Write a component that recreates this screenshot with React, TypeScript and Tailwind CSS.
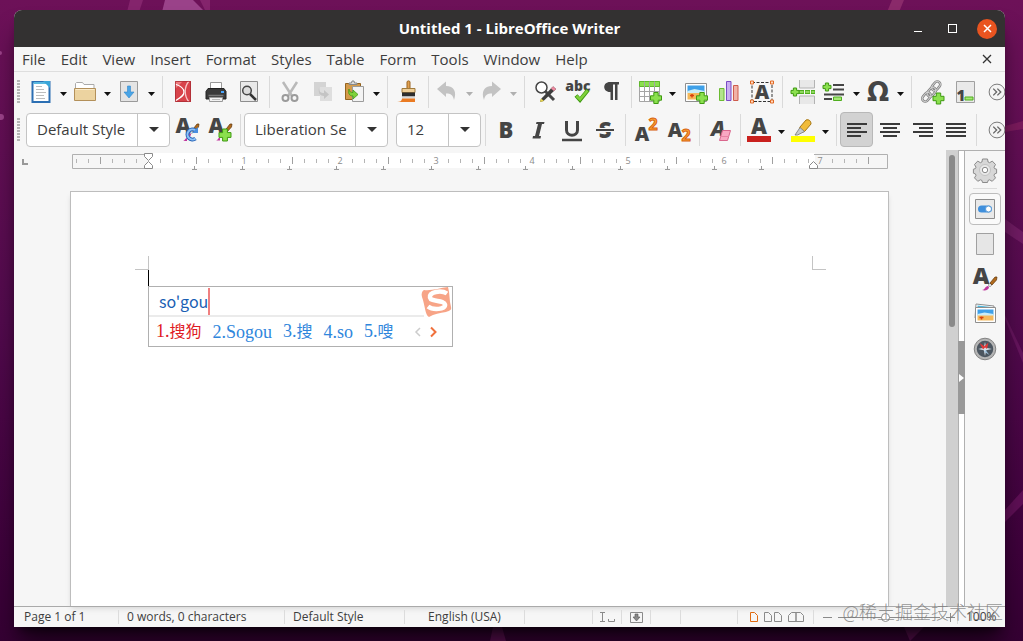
import React from 'react';

const MENUS = ['File', 'Edit', 'View', 'Insert', 'Format', 'Styles', 'Table', 'Form', 'Tools', 'Window', 'Help'];

const INK = '#454545';
const SANS = 'Open Sans, sans-serif';

// ---------------------------------------------------------------- icons

const Svg = ({ children, size = 24 }: { children: React.ReactNode; size?: number }) => (
  <svg width={size} height={size} viewBox="0 0 24 24" fill="none" className="shrink-0 overflow-visible" aria-hidden="true">
    {children}
  </svg>
);

const Glyph = ({ x, y, size, fill = INK, children }: { x: number; y: number; size: number; fill?: string; children: string }) => (
  <text x={x} y={y} fontSize={size} fontWeight="800" fontFamily={SANS} fill={fill} textAnchor="middle">
    {children}
  </text>
);

const Plus = ({ x, y, s = 11 }: { x: number; y: number; s?: number }) => {
  const a = s * 0.3;
  const w = s * 0.4;
  return (
    <path
      d={`M${x + a} ${y}h${w}v${a}h${a}v${w}h-${a}v${a}h-${w}v-${a}h-${a}v-${w}h${a}z`}
      fill="#8be04e"
      stroke="#3f9a12"
      strokeWidth="1"
    />
  );
};

const Brush = ({ x, y }: { x: number; y: number }) => (
  <g transform={`translate(${x} ${y})`}>
    <path d="M0 12c2 0 1-3 4-3l1 1c0 3-3 3-5 2z" fill="#c0359c" />
    <path d="M4 8.500l2-2 1.500 1.500-2 2z" fill="#ddd" stroke="#888" strokeWidth=".5" />
    <path d="M6 6.500L11 0l2 0-.5 3L8 8z" fill="#b06a1c" stroke="#5d3408" strokeWidth=".7" />
  </g>
);

const NewIcon = () => (
  <Svg>
    <path d="M3.500 2h17v20h-17z" fill="#fff" stroke="#2c6fb3" strokeWidth="2" />
    <path d="M4.500 3h15" stroke="#58b8e0" strokeWidth="2" />
    <path d="M14 1h7v7z" fill="#3aa5d8" />
    <path d="M7 6.500h6M7 9.500h8M7 12.500h10M7 15.500h8M7 18.500h9" stroke="#bdbdbd" />
  </Svg>
);

const FolderIcon = () => (
  <Svg>
    <path d="M2.500 8V3.500l1-1h6l1.500 2h10v5" fill="#fff" stroke="#aaa" />
    <path d="M1.500 8.500h21v12h-21z" fill="#ecd3a0" stroke="#b3905a" />
    <path d="M2.500 9.500h19" stroke="#fbeccb" />
  </Svg>
);

const SaveIcon = () => (
  <Svg>
    <path d="M3.500 1.500h17v20h-17z" fill="#e4e4e4" stroke="#9a9a9a" />
    <path d="M10.500 6h3v6H17l-5 6-5-6h3.500z" fill="#4aa5e6" stroke="#2f86cc" strokeWidth=".6" />
  </Svg>
);

const PdfIcon = () => (
  <Svg>
    <path d="M4 1h16v21H4z" fill="#d8434b" />
    <path d="M4 1h8L4 9z" fill="#ef7c80" />
    <path d="M4 4c6 2 9 5 9 8 0 4-4 6-9 9" stroke="#fff" strokeWidth="1.300" />
    <path d="M18 1c-5 6-5 15 0 21" stroke="#f8c5c7" strokeWidth="1.300" />
    <path d="M4.500 1.500h15v20h-15z" stroke="#a92c33" strokeWidth=".8" />
  </Svg>
);

const PrintIcon = () => (
  <Svg>
    <path d="M6.500 2.500h11v8h-11z" fill="#fff" stroke="#999" />
    <path d="M4 8.500h16l2 3v7.500H2v-7.500z" fill="#3a3a3a" stroke="#222" />
    <path d="M4.500 15.500h15" stroke="#777" strokeWidth="1.500" />
    <path d="M17 11h3v2h-3z" fill="#4aa7ff" />
    <path d="M5.500 17.500h13v4h-13z" fill="#f2f2f2" stroke="#999" />
    <path d="M8 19.500h8" stroke="#bbb" />
  </Svg>
);

const PreviewIcon = () => (
  <Svg>
    <path d="M3.500 1.500h17v20h-17z" fill="#e9e9e9" stroke="#8e8e8e" />
    <circle cx="10" cy="10.500" r="4.300" fill="#dcdcdc" stroke={INK} strokeWidth="1.500" />
    <path d="M13 14l6 6" stroke="#333" strokeWidth="2.500" />
  </Svg>
);

const CutIcon = () => (
  <Svg>
    <path d="M5 2l9 14M19 2l-9 14" stroke="#b9b9b9" strokeWidth="2.500" />
    <circle cx="7.500" cy="18" r="3" stroke="#9b9b9b" strokeWidth="2" />
    <circle cx="16.500" cy="18" r="3" stroke="#9b9b9b" strokeWidth="2" />
  </Svg>
);

const CopyIcon = () => (
  <Svg>
    <path d="M3 2h12v14H3z" fill="#d4d4d4" />
    <path d="M9 7h12v14H9z" fill="#dedede" />
    <path d="M8 8c0 4 2 5 5 5v-3l5 4.500-5 4.500v-3c-4 0-6-3-5-8z" fill="#c4c4c4" />
  </Svg>
);

const PasteIcon = () => (
  <Svg>
    <path d="M3.500 3.500h15v16h-15z" fill="#d49a4a" stroke="#94631f" />
    <path d="M7 4.500V3h2.500l.5-2h2l.5 2H15v1.500z" fill="#ddd" stroke="#888" />
    <path d="M10.500 6.500h11v15h-11z" fill="#f3f3f3" stroke="#9b9b9b" />
    <path d="M7 9c0 3 2 3.500 4 3.500V10l5 4.500-5 4.500v-3c-4 0-5-3-4-7z" fill="#7fd13b" stroke="#3f9a12" strokeWidth=".8" />
  </Svg>
);

const BrushIcon = () => (
  <Svg>
    <path d="M11 9V2c0-1.500 3-1.500 3 0v7" fill="#e0a050" stroke="#9b6420" />
    <path d="M6 8.500h13v4H6z" fill="#efcf98" stroke="#a17b3c" />
    <path d="M6 12.500h13v4H6z" fill="#2e2e2e" />
    <path d="M6 16.500h13v2H6z" fill="#d9d9d9" />
    <path d="M6 18.500h13V22H1c3 0 5-1 5-3.500z" fill="#ea7b23" />
  </Svg>
);

const UndoIcon = () => (
  <Svg>
    <path d="M2 9l9-7.500v4.500c8 0 11 6 8 14-1-5-3-6.500-8-6.500V17z" fill="#c3c3c3" />
  </Svg>
);

const RedoIcon = () => (
  <Svg>
    <path d="M22 9l-9-7.500v4.500C5 6 2 12 5 20c1-5 3-6.500 8-6.500V17z" fill="#c3c3c3" />
  </Svg>
);

const FindIcon = () => (
  <Svg>
    <circle cx="8.500" cy="7.500" r="5.500" fill="#fff" stroke={INK} strokeWidth="1.500" />
    <path d="M12 11l9 9" stroke={INK} strokeWidth="3" />
    <path d="M8 19L18 8.500l3 2.500-10.500 10L7 22z" fill="#3d3d3d" />
    <path d="M18 8.500l2-2 3 2.500-2 2z" fill="#f08aa0" stroke="#8a4a5a" strokeWidth=".5" />
    <path d="M8 18.500l3 2.500-4 1z" fill="#e9d64c" />
  </Svg>
);

const SpellIcon = () => (
  <Svg>
    <Glyph x={12} y={11} size={14}>abc</Glyph>
    <path d="M10 15.500l4 4.500 8-10" stroke="#3f9a12" strokeWidth="4" />
    <path d="M10.500 16l3.500 3.500 7.500-9" stroke="#7fd13b" strokeWidth="2.500" />
  </Svg>
);

const PilcrowIcon = () => (
  <Svg>
    <path d="M11 2h9v2.500h-1.500V20H16V4.500h-2V20h-2.500v-8C3.500 12.500 3 2 11 2z" fill={INK} />
  </Svg>
);

const TableIcon = () => (
  <Svg>
    <path d="M1.500 1.500h20v20h-20z" fill="#fff" stroke="#a5a5a5" />
    <path d="M1.500 1.500h20v5h-20z" fill="#8be04e" stroke="#5fb92c" />
    <path d="M1.500 11.500h20M1.500 16.500h20M6.500 1.500v20M11.500 1.500v20M16.500 1.500v20" stroke="#a5a5a5" />
    <Plus x={12.5} y={12.5} />
  </Svg>
);

const ImageIcon = () => (
  <Svg>
    <path d="M1.500 3.500h21v18h-21z" fill="#fff" stroke="#8e8e8e" />
    <path d="M3.500 5.500h17v7h-17z" fill="#3fa0e8" />
    <path d="M3.500 11l7-2 10 2v2h-17z" fill="#c9ecf7" />
    <path d="M3.500 13h17v6.500h-17z" fill="#f4b85a" />
    <path d="M6 15.500h4M8 14v3.500" stroke="#d9400d" strokeWidth="1.500" />
    <Plus x={12.5} y={12.5} />
  </Svg>
);

const ChartIcon = () => (
  <Svg>
    <path d="M2.500 8.500h4.500v12H2.500z" fill="#b3e38c" stroke="#6bbb32" />
    <path d="M9.500 1.500H14v19H9.500z" fill="#c9aef0" stroke="#7a4cc4" />
    <path d="M16.500 5.500H21v15h-4.500z" fill="#f0b3a7" stroke="#cf5c4c" />
  </Svg>
);

const TextBoxIcon = () => (
  <Svg>
    <path d="M2 2.500h20v19H2z" stroke="#333" strokeDasharray="3 1.500" />
    <Glyph x={12} y={19} size={20}>A</Glyph>
    {[[0.5, 1], [20.5, 1], [0.5, 20], [20.5, 20]].map(([x, y]) => (
      <path key={`${x}-${y}`} d={`M${x} ${y}h3v3h-3z`} fill="#ffd9c0" stroke="#e06a26" />
    ))}
  </Svg>
);

const PageBreakIcon = () => (
  <Svg>
    <path d="M8.500 0v8h15V0M8.500 24v-8h15v8" fill="#e8e8e8" stroke="#b3b3b3" />
    <path d="M8 12h16" stroke="#4fae1f" strokeWidth="4" strokeDasharray="5 1" />
    <path d="M8.500 12h15" stroke="#a5e874" strokeWidth="1.500" strokeDasharray="4 2" />
    <Plus x={0} y={8} s={8} />
  </Svg>
);

const FieldIcon = () => (
  <Svg>
    <path d="M11 5h11M11 9.500h11M2 14.500h20M2 19h8" stroke={INK} strokeWidth="2" />
    <path d="M11.500 17h8v3.500h-8z" fill="#a5e874" stroke="#4fae1f" />
    <Plus x={1} y={3} s={8} />
  </Svg>
);

const OmegaIcon = () => (
  <Svg>
    <text x={12} y={21} fontSize={26} fontWeight="bold" fontFamily="DejaVu Sans, sans-serif" fill={INK} textAnchor="middle">Ω</text>
  </Svg>
);

const LinkIcon = () => (
  <Svg>
    <g stroke="#7d7d7d" strokeWidth="2.500">
      <rect x="13" y="1" width="6" height="10" rx="3" transform="rotate(40 16 6)" />
      <rect x="8.500" y="7" width="6" height="10" rx="3" transform="rotate(40 11.500 12)" />
      <rect x="3.500" y="12" width="6" height="10" rx="3" transform="rotate(40 6.500 17)" />
    </g>
    <g stroke="#d0d0d0" strokeWidth="1">
      <rect x="13" y="1" width="6" height="10" rx="3" transform="rotate(40 16 6)" />
      <rect x="8.500" y="7" width="6" height="10" rx="3" transform="rotate(40 11.500 12)" />
      <rect x="3.500" y="12" width="6" height="10" rx="3" transform="rotate(40 6.500 17)" />
    </g>
    <Plus x={13} y={13} />
  </Svg>
);

const FootnoteIcon = () => (
  <Svg>
    <path d="M3.500 1.500h18v21h-18z" fill="#e9e9e9" stroke="#a0a0a0" />
    <Glyph x={8} y={21} size={15}>1</Glyph>
    <path d="M12 17h8v3h-8z" fill="#a5e874" stroke="#4fae1f" />
  </Svg>
);

const UpdateStyleIcon = () => (
  <Svg>
    <Glyph x={8} y={15} size={21}>A</Glyph>
    <Brush x={11} y={6} />
    <path d="M8 23c2 0 2-3 4-3v3z" fill="#c0359c" />
    <path d="M20.500 12.500a5 5 0 1 0 0 8" stroke="#2a67b8" strokeWidth="4" />
    <path d="M20.500 12.500a5 5 0 1 0 0 8" stroke="#8cc0f7" strokeWidth="2" />
    <path d="M23 9v6h-6z" fill="#4a8fe0" />
  </Svg>
);

const NewStyleIcon = () => (
  <Svg>
    <Glyph x={8} y={15} size={21}>A</Glyph>
    <Brush x={11} y={6} />
    <path d="M8 22.500c2 0 2-3 4-3v3z" fill="#c0359c" />
    <Plus x={11} y={11} s={12} />
  </Svg>
);

const BoldIcon = () => <Svg><Glyph x={12} y={20} size={22}>B</Glyph></Svg>;

const ItalicIcon = () => (
  <Svg>
    <path d="M9.500 4h8l-.5 2h-2l-3 12h2l-.5 2.500h-8l.5-2.500h2l3-12H9z" fill={INK} />
  </Svg>
);

const UnderlineIcon = () => (
  <Svg>
    <path d="M6.500 3v9c0 7 11 7 11 0V3" stroke={INK} strokeWidth="3" />
    <path d="M2 22h20" stroke={INK} strokeWidth="2.500" />
  </Svg>
);

const StrikeIcon = () => (
  <Svg>
    <Glyph x={12} y={20} size={22}>S</Glyph>
    <path d="M3 12h18" stroke="#f6f6f6" strokeWidth="4" />
    <path d="M3 12h18" stroke={INK} strokeWidth="2" />
  </Svg>
);

const SuperIcon = () => (
  <Svg>
    <Glyph x={8} y={23} size={20}>A</Glyph>
    <text x={19} y={12} fontSize={16} fontWeight="bold" fontFamily={SANS} fill="#f9a23c" stroke="#d9620b" strokeWidth="1" textAnchor="middle">2</text>
  </Svg>
);

const SubIcon = () => (
  <Svg>
    <Glyph x={8} y={19} size={20}>A</Glyph>
    <text x={19} y={23} fontSize={16} fontWeight="bold" fontFamily={SANS} fill="#f9a23c" stroke="#d9620b" strokeWidth="1" textAnchor="middle">2</text>
  </Svg>
);

const ClearIcon = () => (
  <Svg>
    <text x={10} y={18} fontSize={21} fontWeight="800" fontStyle="italic" fontFamily={SANS} fill={INK} textAnchor="middle">A</text>
    <path d="M14.500 12.500h8l-3 10h-8z" fill="#f9a8c2" stroke="#d9668c" />
    <path d="M13 18.500h8" stroke="#e884a5" />
  </Svg>
);

const FontColorIcon = () => (
  <Svg>
    <Glyph x={12} y={16} size={22}>A</Glyph>
    <path d="M0 18h24v6H0z" fill="#c9211e" />
  </Svg>
);

const HighlightIcon = () => (
  <Svg>
    <path d="M9 9l6-7c3-1 5 1 5 4l-6 7c-1 2-7 0-5-4z" fill="#f0bb3a" stroke="#a87712" />
    <path d="M9 9.500L4 17l2.500 0 7-3.500z" fill="#c7ccd0" stroke="#777" strokeWidth=".8" />
    <path d="M0 18h24v6H0z" fill="#ffff00" />
  </Svg>
);

const AlignIcon = ({ d }: { d: string }) => (
  <Svg>
    <path d={d} stroke="#3a3a3a" strokeWidth="1.800" />
  </Svg>
);

const MoreIcon = () => (
  <Svg size={18}>
    <circle cx="12" cy="12" r="10.500" fill="#f4f4f4" stroke="#777" strokeWidth="1.300" />
    <path d="M7 7.500l4.500 4.500L7 16.500M12.500 7.500L17 12l-4.500 4.500" stroke="#666" strokeWidth="1.800" />
  </Svg>
);

const GearIcon = () => (
  <Svg>
    <path
      d="M9.500 1h5l.6 3 1.500.7 2.700-1.600 3.200 3.400-1.500 2.700.6 1.400 2 .6v4l-2 .7-.6 1.400 1.500 2.600-3.300 3.400-2.600-1.500-1.500.6-.6 2.100h-5l-.6-2.100-1.500-.6-2.600 1.500-3.300-3.400 1.500-2.600-.6-1.400-2-.7v-4l2-.6.6-1.400-1.500-2.700 3.200-3.400L7.400 4.700 8.900 4z"
      fill="#d7d7d7"
      stroke="#8a8a8a"
    />
    <circle cx="12" cy="12" r="5.500" fill="#e9e9e9" stroke="#c2c2c2" />
    <circle cx="12" cy="12" r="2.700" fill="#fff" stroke="#8a8a8a" />
  </Svg>
);

const PropertiesIcon = () => (
  <Svg>
    <path d="M2.500 2.500h19v19h-19z" fill="#e9e9e9" stroke="#8e8e8e" />
    <rect x="5" y="8.500" width="14" height="7" rx="3.500" fill="#3f8fdc" />
    <circle cx="15.500" cy="12" r="3" fill="#fff" stroke="#5a9ad6" />
  </Svg>
);

const PageIcon = () => (
  <Svg>
    <path d="M3.500 1.500h17v21h-17z" fill="#e6e6e6" stroke="#a0a0a0" />
  </Svg>
);

const StylesIcon = () => (
  <Svg>
    <Glyph x={8} y={17} size={23}>A</Glyph>
    <path d="M9 23c3 0 3-4 6-4l1 1c0 3-4 4-7 3z" fill="#c0359c" />
    <path d="M15 18l2-2 2 2-2 2z" fill="#ddd" stroke="#888" strokeWidth=".6" />
    <path d="M17 16l5-6h2l-.5 3L19 18z" fill="#b06a1c" stroke="#5d3408" strokeWidth=".7" />
  </Svg>
);

const GalleryIcon = () => (
  <Svg>
    <path d="M3 2l18 2-1 14-18-2z" fill="#fff" stroke="#8e8e8e" />
    <path d="M4.500 3.500l14 1.500v3h-14z" fill="#4bb7dd" />
    <path d="M2.500 5.500h20v15h-20z" fill="#fff" stroke="#8e8e8e" />
    <path d="M4.500 7.500h16v6h-16z" fill="#3fa0e8" />
    <path d="M4.500 12l7-1.500 9 1.500v2h-16z" fill="#c9ecf7" />
    <path d="M4.500 13.500h16v5h-16z" fill="#f4b85a" />
    <path d="M6.500 15.500h4M8.500 14.500v3" stroke="#d9400d" strokeWidth="1.500" />
  </Svg>
);

const NavigatorIcon = () => (
  <Svg>
    <circle cx="12" cy="12" r="9.500" fill="#4c5660" stroke="#b5b5b5" strokeWidth="2.500" />
    <circle cx="12" cy="12" r="10.800" stroke="#6e6e6e" strokeWidth=".8" />
    <path d="M12 5l1.200 5.800L19 12l-5.800 1.200L12 19l-1.200-5.800L5 12l5.800-1.200z" fill="#d6e0e8" />
    <path d="M15.500 5.500L14 12l-3-2.500z" fill="#e03a3a" />
    <path d="M6.500 6l6 4-2.500 2.500z" fill="#e03a3a" />
    <path d="M12.500 13l4 5-5.500-3.500z" fill="#9fc3e0" />
  </Svg>
);

// ---------------------------------------------------------------- toolbar parts

const ToolButton = ({ label, active, children }: { label: string; active?: boolean; children: React.ReactNode }) => (
  <button
    aria-label={label}
    className={`flex h-[35px] w-[33px] shrink-0 items-center justify-center rounded-sm border ${
      active ? 'border-[#b8b8b8] bg-[#d2d2d2]' : 'border-transparent'
    }`}
  >
    {children}
  </button>
);

const Caret = ({ dim }: { dim?: boolean }) => (
  <svg width="7" height="4" viewBox="0 0 7 4" aria-hidden="true">
    <path d="M0 0h7L3.500 4z" fill={dim ? '#b0b0b0' : '#111'} />
  </svg>
);

const SplitButton = ({ label, dim, children }: { label: string; dim?: boolean; children: React.ReactNode }) => (
  <div className="flex h-[35px] shrink-0">
    <button aria-label={label} className="flex w-[30px] items-center justify-center">{children}</button>
    <button aria-label={`${label} options`} className="flex w-[14px] items-center justify-center pt-1">
      <Caret dim={dim} />
    </button>
  </div>
);

const Gap = () => (
  <div className="flex w-2 shrink-0 justify-center">
    <div className="h-8 w-px bg-[#dadada]" />
  </div>
);

const Grip = () => (
  <svg width="3" height="23" viewBox="0 0 3 23" className="mr-[6px] shrink-0" aria-hidden="true">
    <path d="M1.500 0v23" stroke="#b5b5b5" strokeWidth="3" strokeDasharray="2 1" />
  </svg>
);

const Combo = ({ label, value, className }: { label: string; value: string; className: string }) => (
  <div className={`relative h-[34px] shrink-0 rounded border border-[#c4c4c4] bg-white ${className}`}>
    <select aria-label={label} className="h-full w-full appearance-none bg-transparent pl-[10px] text-[15px] text-[#3d3d3d] outline-none">
      <option>{value}</option>
    </select>
    <span className="pointer-events-none absolute inset-y-0 right-0 flex w-8 items-center justify-center border-l border-[#c4c4c4]">
      <svg width="10" height="5" viewBox="0 0 10 5" aria-hidden="true">
        <path d="M0 0h10L5 5z" fill="#333" />
      </svg>
    </span>
  </div>
);

// ---------------------------------------------------------------- ruler

const INCH = 96;
const ZERO = 76;

const Ruler = () => {
  const ticks = Array.from({ length: 67 }, (_, i) => i - 6).filter(n => n !== 0);
  return (
    <div className="mr-[58px] ml-[58px] h-[18px] overflow-hidden">
      <svg width="816" height="18" viewBox="0 0 816 18" fill="none" aria-hidden="true">
        <path d="M76 1h667v15H76z" fill="#fff" />
        <path d="M76 2.500H.5v14H76M742 2.500h73.500v14H742" stroke="#b0b0b0" />
        {ticks.map(n => {
          const x = ZERO + n * 12 + 0.5;
          if (n % 8 === 0) return null;
          const half = n % 4 === 0;
          return <path key={n} d={half ? `M${x} 5v7` : `M${x} 7v4`} stroke={half ? '#a0a0a0' : '#b5b5b5'} />;
        })}
        {[1, 2, 3, 4, 5, 6, 7].map(n => (
          <text key={n} x={ZERO + n * INCH} y={12} fontSize={9} fontFamily={SANS} fill="#8c8c8c" textAnchor="middle">
            {n}
          </text>
        ))}
        {/* default tab stops */}
        {Array.from({ length: 13 }, (_, i) => Math.round(ZERO + (i + 1) * 47.25) - 1).map(x => (
          <path key={x} d={`M${x}.500 14v3M${x - 2} 17.500h5`} stroke="#9a9a9a" />
        ))}
        <path d="M72.500 1.500h8v3l-4 4-4-4zM72.500 16.500h8v-3l-4-4-4 4z" fill="#fff" stroke="#8a8a8a" />
        <path d="M737.500 16.500h8v-3l-4-4-4 4z" fill="#fff" stroke="#8a8a8a" />
      </svg>
    </div>
  );
};

// ---------------------------------------------------------------- input method popup

const CANDIDATES = [
  { n: 1, latin: '', han: '搜狗' },
  { n: 2, latin: 'Sogou', han: '' },
  { n: 3, latin: '', han: '搜' },
  { n: 4, latin: 'so', han: '' },
  { n: 5, latin: '', han: '嗖' },
];

const ImePopup = () => (
  <div className="relative h-[61px] w-[305px] border border-[#b0b0b0] bg-white">
    <div className="mr-7 flex h-[30px] items-center border-b-2 border-[#ebebeb] pl-[10px]">
      <input
        aria-label="Pinyin"
        defaultValue="so'gou"
        size={4}
        className="field-sizing-content p-0 font-['Noto_Sans_CJK_SC',sans-serif] text-[16px] text-[#1a5fb4] outline-none"
      />
      <span className="h-[27px] w-[2px] bg-[#f08080]" />
    </div>
    <div className="flex h-[29px] items-center gap-[11px] pl-[7px] font-['Liberation_Serif','Noto_Sans_CJK_SC',serif]">
      {CANDIDATES.map(c => (
        <button key={c.n} className={`flex items-baseline text-[18px] leading-6 ${c.n === 1 ? 'text-[#e01b24]' : 'text-[#2f86dc]'}`}>
          {c.n}.{c.latin}
          {c.han && <span className="text-[16px]">{c.han}</span>}
        </button>
      ))}
      <svg width="26" height="12" viewBox="0 0 26 12" fill="none" className="ml-2" aria-hidden="true">
        <path d="M7 2L3 6l4 4" stroke="#ccc" strokeWidth="1.500" />
        <path d="M18 1.500l4.500 4.500-4.500 4.500" stroke="#f0703c" strokeWidth="2" />
      </svg>
    </div>
    <svg width="31" height="31" viewBox="0 0 31 31" fill="none" className="absolute right-0 top-0" aria-hidden="true">
      <path d="M3 3C10 4 19 1 27 0c2 6 1 13 3 20 1 3-2 4-5 5-6 1-12 2-17 5-4-2-4-12-7-20-1-3 0-6 2-7z" fill="#f7a487" />
      <path d="M26 6.500c-6-4-18-1.500-17 4 1 5 14 2 15 7 1 5-12 6-17 2" stroke="#fff" strokeWidth="4.500" />
    </svg>
  </div>
);

// ---------------------------------------------------------------- app

const Cell = ({ className, children }: { className: string; children?: React.ReactNode }) => (
  <div className={`flex h-[14px] shrink-0 items-center border-r border-[#dcdcdc] ${className}`}>{children}</div>
);

export default function App() {
  return (
    <div className="relative flex h-screen flex-col overflow-hidden bg-linear-to-b from-[#6d1158] via-[#520a4d] to-[#350033] pt-[10px] pr-[18px] pb-[14px] pl-[14px] font-['Open_Sans',sans-serif] text-[#3d3d3d]">
      {/* wallpaper shapes */}
      <svg className="absolute inset-0 h-full w-full" viewBox="0 0 1023 641" preserveAspectRatio="none" aria-hidden="true">
        <path d="M165 0h28l12 12h-43z" fill="#9a4289" />
        <path d="M130 0h13l-4 12h-12zM200 0h10v12h-4z" fill="#84246c" />
        <path d="M892 0h12l-5 12h-12z" fill="#8a2a6a" />
        <path d="M1005 126l18-5v8l-18 3z" fill="#7a1a5c" />
        <path d="M1005 219l18 13v12l-18-12z" fill="#6f1b62" />
        <path d="M1005 315l18 38v10l-18-44z" fill="#64145c" />
        <path d="M1005 510l18-20v14l-18 18z" fill="#5e0f55" />
        <path d="M493 627h9l4 14h-16zM904 627h20l-14 14z" fill="#5a0f50" />
        <circle cx="0" cy="53" r="2" fill="#9a4289" />
        <circle cx="1" cy="117" r="3" fill="#9a4289" />
      </svg>

      <div className="relative flex min-h-0 flex-1 flex-col overflow-hidden rounded-t-lg bg-[#f6f6f6] shadow-xl shadow-black/60">
        {/* title bar */}
        <div className="relative flex h-[37px] shrink-0 items-center justify-center bg-[#333131] text-white">
          <h1 className="text-[15px] font-bold">Untitled 1 - LibreOffice Writer</h1>
          <div className="absolute right-2 flex items-center gap-6">
            <button aria-label="Minimize" className="flex h-5 w-[10px] items-center">
              <span className="mt-[5px] h-px w-2 bg-white" />
            </button>
            <button aria-label="Maximize" className="size-[9px] border border-white" />
            <button aria-label="Close" className="-ml-1 flex size-5 items-center justify-center rounded-full bg-[#e95420]">
              <svg width="9" height="9" viewBox="0 0 9 9" aria-hidden="true">
                <path d="M1 1l7 7M8 1L1 8" stroke="#fff" strokeWidth="1.500" />
              </svg>
            </button>
          </div>
        </div>

        {/* menu bar */}
        <nav className="flex h-[25px] shrink-0 items-center gap-[15px] border-b border-[#dedede] px-2 text-[15px]">
          {MENUS.map(m => (
            <button key={m}>{m}</button>
          ))}
          <button aria-label="Close document" className="mr-[5px] ml-auto">
            <svg width="10" height="10" viewBox="0 0 10 10" aria-hidden="true">
              <path d="M1 1l8 8M9 1L1 9" stroke="#333" strokeWidth="1.300" />
            </svg>
          </button>
        </nav>

        {/* standard toolbar */}
        <div className="flex h-[39px] shrink-0 items-center overflow-hidden pl-[3px]">
          <Grip />
          <SplitButton label="New"><NewIcon /></SplitButton>
          <SplitButton label="Open"><FolderIcon /></SplitButton>
          <SplitButton label="Save"><SaveIcon /></SplitButton>
          <Gap />
          <ToolButton label="Export as PDF"><PdfIcon /></ToolButton>
          <ToolButton label="Print"><PrintIcon /></ToolButton>
          <ToolButton label="Print Preview"><PreviewIcon /></ToolButton>
          <Gap />
          <ToolButton label="Cut"><CutIcon /></ToolButton>
          <ToolButton label="Copy"><CopyIcon /></ToolButton>
          <SplitButton label="Paste"><PasteIcon /></SplitButton>
          <Gap />
          <ToolButton label="Clone Formatting"><BrushIcon /></ToolButton>
          <Gap />
          <SplitButton label="Undo" dim><UndoIcon /></SplitButton>
          <SplitButton label="Redo" dim><RedoIcon /></SplitButton>
          <Gap />
          <ToolButton label="Find and Replace"><FindIcon /></ToolButton>
          <ToolButton label="Spelling"><SpellIcon /></ToolButton>
          <ToolButton label="Formatting Marks"><PilcrowIcon /></ToolButton>
          <Gap />
          <SplitButton label="Insert Table"><TableIcon /></SplitButton>
          <ToolButton label="Insert Image"><ImageIcon /></ToolButton>
          <ToolButton label="Insert Chart"><ChartIcon /></ToolButton>
          <ToolButton label="Insert Text Box"><TextBoxIcon /></ToolButton>
          <Gap />
          <ToolButton label="Insert Page Break"><PageBreakIcon /></ToolButton>
          <SplitButton label="Insert Field"><FieldIcon /></SplitButton>
          <SplitButton label="Insert Special Character"><OmegaIcon /></SplitButton>
          <Gap />
          <ToolButton label="Insert Hyperlink"><LinkIcon /></ToolButton>
          <ToolButton label="Insert Footnote"><FootnoteIcon /></ToolButton>
          <button aria-label="More controls" className="-mr-px ml-auto"><MoreIcon /></button>
        </div>

        {/* formatting toolbar */}
        <div className="flex h-[39px] shrink-0 items-center overflow-hidden pb-[2px] pl-[3px]">
          <Grip />
          <Combo label="Paragraph Style" value="Default Style" className="w-[144px]" />
          <ToolButton label="Update Style"><UpdateStyleIcon /></ToolButton>
          <ToolButton label="New Style"><NewStyleIcon /></ToolButton>
          <Gap />
          <Combo label="Font Name" value="Liberation Se" className="w-[144px]" />
          <div className="w-2" />
          <Combo label="Font Size" value="12" className="w-[85px]" />
          <Gap />
          <ToolButton label="Bold"><BoldIcon /></ToolButton>
          <ToolButton label="Italic"><ItalicIcon /></ToolButton>
          <ToolButton label="Underline"><UnderlineIcon /></ToolButton>
          <ToolButton label="Strikethrough"><StrikeIcon /></ToolButton>
          <Gap />
          <ToolButton label="Superscript"><SuperIcon /></ToolButton>
          <ToolButton label="Subscript"><SubIcon /></ToolButton>
          <Gap />
          <ToolButton label="Clear Formatting"><ClearIcon /></ToolButton>
          <Gap />
          <SplitButton label="Font Color"><FontColorIcon /></SplitButton>
          <SplitButton label="Highlighting"><HighlightIcon /></SplitButton>
          <Gap />
          <ToolButton label="Align Left" active><AlignIcon d="M2 6h20M2 10h14M2 14h20M2 18h14" /></ToolButton>
          <ToolButton label="Center"><AlignIcon d="M2 6h20M5 10h14M2 14h20M5 18h14" /></ToolButton>
          <ToolButton label="Align Right"><AlignIcon d="M2 6h20M8 10h14M2 14h20M8 18h14" /></ToolButton>
          <ToolButton label="Justified"><AlignIcon d="M2 6h20M2 10h20M2 14h20M2 18h20" /></ToolButton>
          <Gap />
          <button aria-label="More controls" className="-mr-px ml-auto"><MoreIcon /></button>
        </div>

        {/* workspace */}
        <div className="flex min-h-0 flex-1">
          <main className="flex min-w-0 flex-1 flex-col pt-[2px]">
            <div className="relative">
              <span className="absolute top-[7px] left-2 size-[6px] border-b-2 border-l-2 border-[#999]" />
              <Ruler />
            </div>
            <section className="mt-[21px] mr-[57px] ml-14 min-h-0 flex-1 overflow-hidden border border-b-0 border-[#bdbdbd] bg-white pt-16 shadow-md">
              <div className="flex justify-between pr-[62px] pl-16">
                <span className="size-[14px] border-r border-b border-[#c4c4c4]" />
                <span className="size-[14px] border-b border-l border-[#c4c4c4]" />
              </div>
              <div className="pl-[77px]">
                <div className="h-4 w-px bg-black" />
                <ImePopup />
              </div>
            </section>
          </main>

          <div className="w-3 bg-[#d0d0d0] px-[3px] pt-[5px]">
            <div className="h-[172px] rounded-full bg-[#8a8a8a]" />
          </div>

          <div className="w-[7px] border-t border-r border-l border-[#b0b0b0] bg-white pt-[190px]">
            <button aria-label="Hide Sidebar" className="-mx-px flex h-[73px] w-[7px] items-center justify-center bg-[#999]">
              <svg width="5" height="8" viewBox="0 0 5 8" aria-hidden="true">
                <path d="M0 0l5 4-5 4z" fill="#fff" />
              </svg>
            </button>
          </div>

          <aside className="flex w-10 flex-col items-center border-t border-[#b0b0b0]">
            <button aria-label="Sidebar Settings" className="flex h-[37px] items-center"><GearIcon /></button>
            <div className="h-px w-6 bg-[#dcdcdc]" />
            <button aria-label="Properties" className="mt-1 flex h-8 w-8 items-center justify-center rounded border border-[#bdbdbd] bg-[#fafafa]">
              <PropertiesIcon />
            </button>
            <button aria-label="Page" className="flex h-[35px] items-center pt-[2px]"><PageIcon /></button>
            <button aria-label="Styles" className="flex h-[35px] items-center pt-[2px]"><StylesIcon /></button>
            <button aria-label="Gallery" className="flex h-[35px] items-center pt-[2px]"><GalleryIcon /></button>
            <button aria-label="Navigator" className="flex h-[35px] items-center pt-[2px]"><NavigatorIcon /></button>
          </aside>
        </div>

        {/* status bar */}
        <footer className="flex h-[21px] shrink-0 items-center border-t border-[#aaa] text-[12px]">
          <Cell className="w-[105px] pl-[10px]">Page 1 of 1</Cell>
          <Cell className="w-[166px] pl-2">0 words, 0 characters</Cell>
          <Cell className="w-[120px] pl-2">Default Style</Cell>
          <Cell className="w-[120px] justify-center">English (USA)</Cell>
          <Cell className="min-w-0 flex-1" />
          <Cell className="w-[29px] justify-center">
            <svg width="16" height="12" viewBox="0 0 16 12" fill="none" aria-hidden="true">
              <path d="M1 1.500h5M3.500 1.500v9M1 10.500h5M9.500 8v2.500h6V8" stroke="#8a8a8a" />
            </svg>
          </Cell>
          <Cell className="w-[29px] justify-center">
            <svg width="13" height="11" viewBox="0 0 13 11" fill="none" aria-hidden="true">
              <path d="M.5.5h12v10H.5z" stroke="#8a8a8a" />
              <path d="M5 2h3v3h2L6.500 9 3 5h2z" fill="#888" stroke="#555" strokeWidth=".6" />
            </svg>
          </Cell>
          <Cell className="w-[30px]" />
          <Cell className="w-[57px]" />
          <Cell className="w-[76px] gap-[6px] pl-3">
            <button aria-label="Single-page view">
              <svg width="8" height="10" viewBox="0 0 8 10" fill="none"><path d="M.5.5h4l3 3v6h-7z" stroke="#e06a10" /></svg>
            </button>
            <button aria-label="Multiple-page view">
              <svg width="18" height="10" viewBox="0 0 18 10" fill="none"><path d="M.5.5h4l3 3v6h-7zM10.500.5h4l3 3v6h-7z" stroke="#8a8a8a" /></svg>
            </button>
            <button aria-label="Book view">
              <svg width="16" height="10" viewBox="0 0 16 10" fill="none"><path d="M8 9.500H.5v-6l3-3H8zM8 9.500h7.500v-6l-3-3H8z" stroke="#8a8a8a" /></svg>
            </button>
          </Cell>
          <Cell className="w-[144px] gap-[6px] pl-[9px]">
            <button aria-label="Zoom out" className="h-px w-[9px] bg-[#8a8a8a]" />
            <input
              type="range"
              aria-label="Zoom"
              defaultValue={46}
              className="h-px w-[102px] appearance-none bg-[#8a8a8a] [&::-webkit-slider-thumb]:size-[9px] [&::-webkit-slider-thumb]:appearance-none [&::-webkit-slider-thumb]:rounded-full [&::-webkit-slider-thumb]:border [&::-webkit-slider-thumb]:border-[#8a8a8a] [&::-webkit-slider-thumb]:bg-white"
            />
            <button aria-label="Zoom in">
              <svg width="9" height="9" viewBox="0 0 9 9"><path d="M0 4.500h9M4.500 0v9" stroke="#8a8a8a" /></svg>
            </button>
          </Cell>
          <div className="w-[47px] pl-2">100%</div>
        </footer>
      </div>

      <p className="pointer-events-none absolute right-5 bottom-[18px] font-['Noto_Sans_CJK_SC',sans-serif] text-[18px] leading-6 font-light text-[#777]/80">
        @稀土掘金技术社区
      </p>
    </div>
  );
}
